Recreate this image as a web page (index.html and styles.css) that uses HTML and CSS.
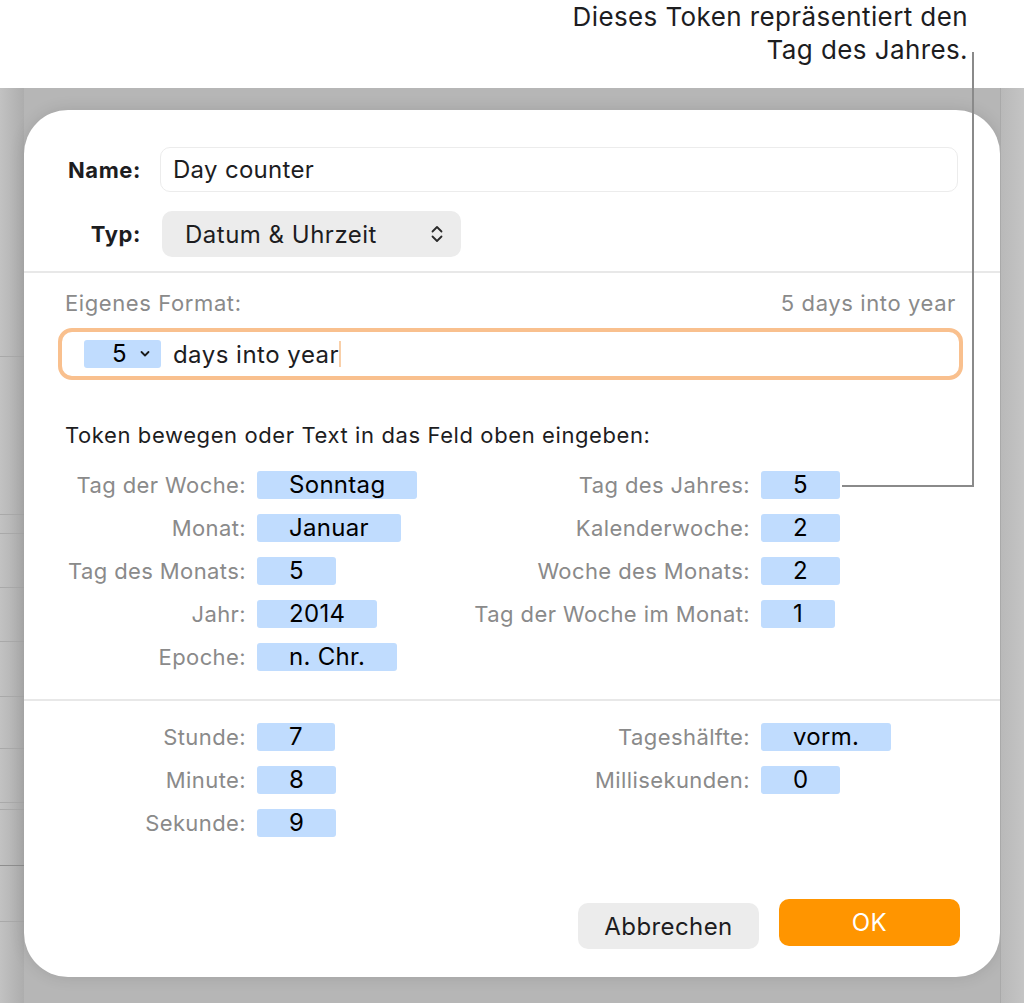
FILE: index.html
```html
<!DOCTYPE html>
<html>
<head>
    <title>Eigenes Format</title>
    <link rel="stylesheet" href="styles.css">
</head>
<body>
    <div class="callout">
        <p>Dieses Token repräsentiert den<br>Tag des Jahres.</p>
    </div>

    <div class="backdrop">
        <div class="sheet-edge">
            <div class="sheet-row"></div>
            <div class="sheet-row"></div>
            <div class="sheet-row"></div>
            <div class="sheet-row"></div>
            <div class="sheet-row"></div>
            <div class="sheet-row"></div>
            <div class="sheet-row"></div>
            <div class="sheet-row"></div>
            <div class="sheet-row"></div>
            <div class="sheet-row dark"></div>
            <div class="sheet-row"></div>
        </div>
        <div class="backdrop-main">
            <div class="dialog">
                <div class="top-section">
                    <div class="field-row">
                        <label class="field-label">Name:</label>
                        <div class="text-input">Day counter</div>
                    </div>
                    <div class="field-row">
                        <label class="field-label">Typ:</label>
                        <div class="select">
                            <span>Datum &amp; Uhrzeit</span>
                            <svg width="14" height="20" viewBox="0 0 14 20">
                                <path d="M2.5 7.5 L7 3 L11.5 7.5 M2.5 12.5 L7 17 L11.5 12.5" fill="none" stroke="#2a2a2a" stroke-width="1.8" stroke-linecap="round" stroke-linejoin="round"/>
                            </svg>
                        </div>
                    </div>
                </div>

                <div class="format-section">
                    <div class="format-head">
                        <span>Eigenes Format:</span>
                        <span>5 days into year</span>
                    </div>
                    <div class="format-field">
                        <span class="token token-menu">5
                            <svg width="12" height="8" viewBox="0 0 12 8">
                                <path d="M2.5 2 L6 5.5 L9.5 2" fill="none" stroke="#1a1a1a" stroke-width="1.8" stroke-linecap="round" stroke-linejoin="round"/>
                            </svg>
                        </span>
                        <span class="format-text">days into year</span><span class="caret"></span>
                    </div>

                    <p class="hint">Token bewegen oder Text in das Feld oben eingeben:</p>

                    <div class="token-grid">
                        <span class="token-label">Tag der Woche:</span>
                        <span class="token">Sonntag</span>
                        <span class="token-label">Tag des Jahres:</span>
                        <span class="token">5</span>

                        <span class="token-label">Monat:</span>
                        <span class="token">Januar</span>
                        <span class="token-label">Kalenderwoche:</span>
                        <span class="token">2</span>

                        <span class="token-label">Tag des Monats:</span>
                        <span class="token">5</span>
                        <span class="token-label">Woche des Monats:</span>
                        <span class="token">2</span>

                        <span class="token-label">Jahr:</span>
                        <span class="token">2014</span>
                        <span class="token-label">Tag der Woche im Monat:</span>
                        <span class="token">1</span>

                        <span class="token-label">Epoche:</span>
                        <span class="token">n. Chr.</span>
                    </div>
                </div>

                <div class="time-section">
                    <div class="token-grid">
                        <span class="token-label">Stunde:</span>
                        <span class="token">7</span>
                        <span class="token-label">Tageshälfte:</span>
                        <span class="token">vorm.</span>

                        <span class="token-label">Minute:</span>
                        <span class="token">8</span>
                        <span class="token-label">Millisekunden:</span>
                        <span class="token">0</span>

                        <span class="token-label">Sekunde:</span>
                        <span class="token">9</span>
                    </div>
                </div>

                <div class="buttons">
                    <button class="btn btn-cancel">Abbrechen</button>
                    <button class="btn btn-ok">OK</button>
                </div>
            </div>
        </div>
        <div class="backdrop-side"></div>
    </div>

    <svg class="leader" width="1024" height="500" viewBox="0 0 1024 500">
        <path d="M973 52 V486 H842" fill="none" stroke="#8a8a8a" stroke-width="2"/>
    </svg>
</body>
</html>
```

FILE: styles.css
```css
body {
    margin: 0;
    font-family: Inter, "Noto Sans", sans-serif;
    color: #1d1d1f;
    background: #fff;
    position: relative;
    width: 1024px;
    height: 1003px;
    overflow: hidden;
}
.callout {
    height: 88px;
    text-align: right;
    padding-right: 56px;
}
.callout p {
    margin: 0;
    font-size: 26px;
    letter-spacing: 0.4px;
    line-height: 33px;
    color: #1d1d1f;
}
.backdrop {
    display: flex;
    height: 915px;
    background: #b6b6b6;
}
.sheet-edge {
    width: 24px;
    display: flex;
    flex-direction: column;
    background: linear-gradient(to right, #c2c2c2, #adadad);
}
.sheet-row {
    height: 53px;
    border-bottom: 1px solid #a9a9a9;
}
.sheet-row:nth-child(1) { height: 268px; }
.sheet-row:nth-child(2) { height: 157px; }
.sheet-row:nth-child(3) { height: 18px; }
.sheet-row:nth-child(6) { height: 54px; }
.sheet-row:nth-child(7) { height: 51px; }
.sheet-row:nth-child(9) { height: 6px; }
.sheet-row:nth-child(10),
.sheet-row:nth-child(11) { height: 55px; }
.sheet-row.dark {
    border-bottom-color: #8e8e8e;
}
.backdrop-main {
    flex: 1;
    padding-top: 22px;
}
.backdrop-side {
    width: 23px;
    border-left: 1px solid #a9a9a9;
    background: linear-gradient(to right, #b9b9b9, #c4c4c4);
}
.dialog {
    width: 976px;
    height: 867px;
    background: #fff;
    border-radius: 44px;
    box-shadow: 0 0 16px rgba(0,0,0,0.12);
    display: flex;
    flex-direction: column;
    box-sizing: border-box;
}
.top-section {
    padding: 37px 42px 14px 41px;
    display: flex;
    flex-direction: column;
    gap: 19px;
    border-bottom: 2px solid #e8e8e8;
}
.field-row {
    display: grid;
    grid-template-columns: 76px 1fr;
    column-gap: 19px;
    align-items: center;
}
.field-label {
    font-weight: 700;
    font-size: 22px;
    letter-spacing: 0.6px;
    text-align: right;
}
.text-input {
    height: 45px;
    box-sizing: border-box;
    border: 1px solid #ececec;
    border-radius: 10px;
    padding: 0 12px;
    font-size: 24px;
    letter-spacing: 0.3px;
    line-height: 43px;
}
.select {
    justify-self: start;
    margin-left: 2px;
    width: 299px;
    height: 46px;
    box-sizing: border-box;
    background: #ececec;
    border-radius: 10px;
    padding: 0 17px 0 23px;
    display: flex;
    align-items: center;
    justify-content: space-between;
    font-size: 24px;
    letter-spacing: 0.5px;
}
.format-section {
    padding: 18px 44px 28px 41px;
    border-bottom: 2px solid #e8e8e8;
}
.format-head {
    display: flex;
    justify-content: space-between;
    font-size: 22px;
    letter-spacing: 0.6px;
    line-height: 24px;
    color: #8a8a8a;
}
.format-field {
    margin: 13px -7px 0 -7px;
    height: 52px;
    box-sizing: border-box;
    border: 4px solid #f9c08e;
    border-radius: 14px;
    padding: 0 22px;
    display: flex;
    align-items: center;
}
.format-text {
    font-size: 24px;
    letter-spacing: 0.5px;
    margin-left: 12px;
}
.caret {
    width: 2px;
    height: 26px;
    background: #f9cfa8;
}
.hint {
    margin: 43px 0 24px;
    font-size: 22px;
    letter-spacing: 0.6px;
    line-height: 24px;
}
.token-grid {
    display: grid;
    grid-template-columns: 181px 172px 310px 1fr;
    column-gap: 11px;
    row-gap: 15px;
    align-items: center;
}
.token-label {
    text-align: right;
    white-space: nowrap;
    font-size: 22px;
    line-height: 28px;
    letter-spacing: 0.4px;
    color: #8a8a8a;
}
.token {
    justify-self: start;
    height: 28px;
    line-height: 28px;
    padding: 0 32px;
    background: #c0dcfe;
    border-radius: 3px;
    font-size: 24px;
    letter-spacing: 0.3px;
    color: #000;
}
.token-menu {
    display: flex;
    align-items: center;
    gap: 12px;
    padding: 0 10px 0 28px;
}
.time-section {
    padding: 22px 42px 0 41px;
}
.buttons {
    margin-top: auto;
    padding: 0 40px 28px;
    display: flex;
    justify-content: flex-end;
    align-items: flex-end;
    gap: 20px;
}
.btn {
    width: 181px;
    height: 46px;
    border: none;
    border-radius: 10px;
    font-family: inherit;
    font-size: 24px;
    letter-spacing: 0.4px;
}
.btn-cancel {
    background: #ececec;
    color: #1d1d1f;
}
.btn-ok {
    height: 47px;
    margin-bottom: 3px;
    background: #ff9500;
    color: #fff;
}
.leader {
    position: absolute;
    top: 0;
    left: 0;
    pointer-events: none;
}
```
